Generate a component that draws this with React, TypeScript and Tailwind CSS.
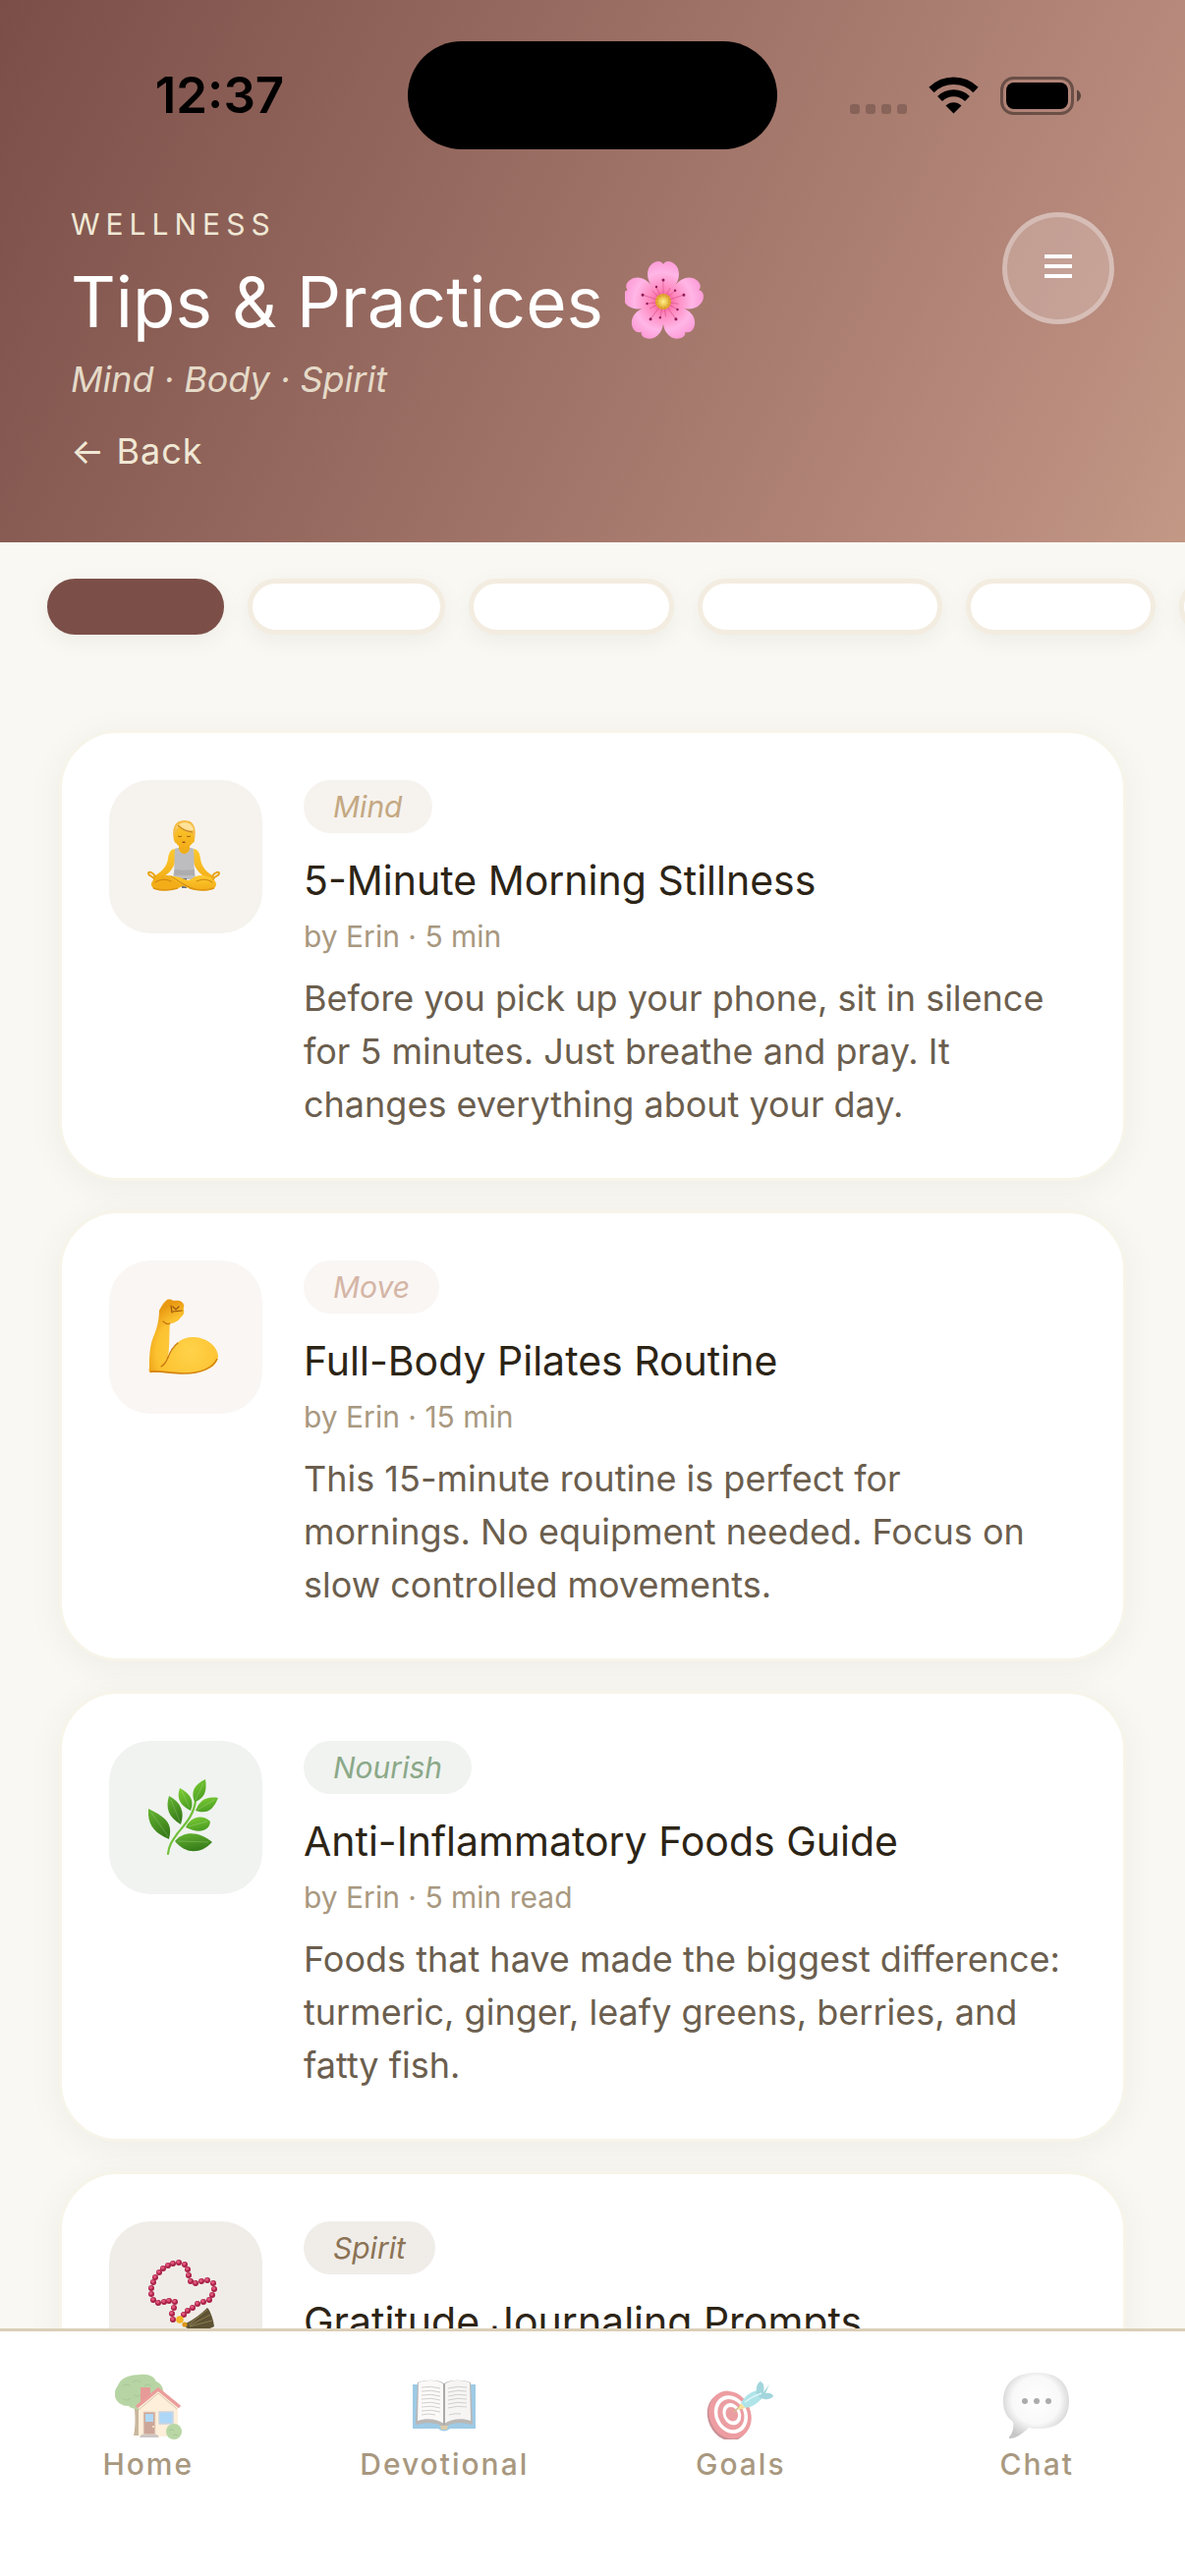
import type { ReactNode } from "react";

/* ---------- Illustrations ---------- */

function Blossom() {
  const petals = [0, 72, 144, 216, 288];
  return (
    <svg role="img" aria-label="Cherry blossom" viewBox="0 0 80 80" className="mb-1 size-20">
      <defs>
        <radialGradient id="petal" gradientUnits="userSpaceOnUse" cx="0" cy="0" r="42">
          <stop offset="0" stopColor="#f0407f" />
          <stop offset="0.3" stopColor="#ff86bd" />
          <stop offset="0.7" stopColor="#ffb6e6" />
          <stop offset="1" stopColor="#fc9ad6" />
        </radialGradient>
        <radialGradient id="pollen">
          <stop offset="0" stopColor="#fff08a" />
          <stop offset="1" stopColor="#dd9c22" />
        </radialGradient>
      </defs>
      <g transform="translate(39 42)">
        {petals.map((a) => (
          <g key={a} transform={`rotate(${a})`}>
            <path
              d="M0 0C-5-8-16-17-16-28C-16-36-10-41-5-41C-3-41-1-40 0-38C1-40 3-41 5-41C10-41 16-36 16-28C16-17 5-8 0 0Z"
              fill="url(#petal)"
            />
            <path d="M0-5V-22M-3-6L-7-15M3-6L7-14" stroke="#d8598f" strokeWidth="0.7" />
            <circle cx="0" cy="-22" r="1.5" fill="#8f1c54" />
            <circle cx="-7" cy="-15" r="1.2" fill="#8f1c54" />
          </g>
        ))}
        <circle r="8" fill="url(#pollen)" />
        <circle r="6" fill="none" stroke="#c98722" strokeWidth="1" strokeDasharray="1 2.4" />
      </g>
    </svg>
  );
}

function Lotus() {
  return (
    <svg role="img" aria-label="Person in lotus position" viewBox="0 0 74 74" className="size-[74px]">
      <defs>
        <linearGradient id="skin" x1="0" y1="0" x2="0" y2="1">
          <stop offset="0" stopColor="#fdca2e" />
          <stop offset="1" stopColor="#f3ad18" />
        </linearGradient>
      </defs>
      <path d="M32 23H43V31L37 36L32 31Z" fill="#f0ae1a" />
      <path d="M29 29C24 29 22 32 21 39C20 47 14 53 5 58L9 62C19 57 27 50 28 42Z" fill="url(#skin)" />
      <path d="M46 29C51 29 53 32 54 39C55 47 60 53 69 58L65 62C56 57 48 50 47 42Z" fill="url(#skin)" />
      <path d="M28 29C29 28 31 28 32 28C32 36 43 36 43 28C45 28 46 28 47 29C48 37 47 44 48 52L49 60H26L27 52C28 44 27 37 28 29Z" fill="#bdbdbf" />
      <path d="M28 50C35 51 41 51 48 50V56H27Z" fill="#adadb0" />
      <path d="M35 59H40V69H35Z" fill="#6b7482" />
      <path d="M26 57C17 54 4 59 4 65C4 72 16 72 24 71C31 70 36 67 41 64Z" fill="#f2ad19" />
      <path d="M49 57C58 54 70 59 70 65C70 72 58 72 50 71C41 70 31 64 22 57C32 56 37 61 42 61C45 60 47 58 49 57Z" fill="url(#skin)" />
      <path d="M24 57C31 61 38 67 48 70M8 63C14 59 20 60 24 62M66 63C60 59 55 60 50 62" stroke="#c98110" strokeWidth="1" fill="none" strokeLinecap="round" />
      <path d="M6 69C14 72 24 71 31 69M68 69C60 72 50 71 43 69" stroke="#dd9410" strokeWidth="1.5" fill="none" />
      <path d="M8 57C5 52 1 52 1 54C1 57 6 56 7 60M66 57C69 52 73 52 73 54C73 57 68 56 67 60" stroke="#e9a318" strokeWidth="2" fill="none" strokeLinecap="round" />
      <path d="M27 12C27 5 31 2 38 2C44 2 48 6 48 12V20C48 22 47 23 46 23C44 26 41 28 37 28C34 28 31 26 29 23C28 23 27 21 27 19Z" fill="url(#skin)" />
      <path d="M27 20C25 11 26 0 38 0C49 0 50 11 48 20L46 13C41 13 35 10 32 6C32 10 29 12 28 14Z" fill="#f5bd48" />
      <path d="M29 9C31 0 46 0 47 10C41 11 35 8 32 4C31 6 30 8 29 9Z" fill="#ffe29a" />
      <path d="M31 5C35 9 39 11 46 12" stroke="#a4640f" strokeWidth="0.8" fill="none" />
      <path d="M31 16q2 1.500 4 0M40 16q2 1.500 4 0" stroke="#a0640c" strokeWidth="1" fill="none" />
      <path d="M35 22q2-1 4 0-2 2-4 0z" fill="#8e3b14" />
    </svg>
  );
}

function Biceps() {
  return (
    <svg role="img" aria-label="Flexed biceps" viewBox="0 0 72 78" className="h-[78px] w-[72px]">
      <defs>
        <radialGradient id="muscle" cx="0.6" cy="0.7" r="0.7">
          <stop offset="0" stopColor="#ffd24a" />
          <stop offset="0.7" stopColor="#fcc22f" />
          <stop offset="1" stopColor="#e99a14" />
        </radialGradient>
      </defs>
      <path
        d="M19 1C21 0 24 1 26 2C30 1 35 2 36 6C37 8 35 9 36 11C37 15 35 17 33 19C30 23 26 25 22 25C21 34 22 46 20 60C24 47 33 39 45 39C58 39 70 47 71 58C71 70 55 77 33 76C22 76 12 74 4 75C1 76 0 74 1 70C1 60 1 49 5 39C9 30 11 20 11 12C13 8 16 3 19 1Z"
        fill="url(#muscle)"
      />
      <path d="M22 25C20 26 17 25 15 23M20 60C22 54 26 48 30 45M20 59C19 63 16 67 13 69" stroke="#c9760f" strokeWidth="1.200" fill="none" strokeLinecap="round" />
      <path d="M2 74C14 73 23 76 36 76C54 76 66 70 70 61" stroke="#d4830f" strokeWidth="1.600" fill="none" />
      <path d="M23 7L24 14M25 8L28 11L31 8M25 13L34 12" stroke="#9a560d" strokeWidth="1.200" fill="none" strokeLinecap="round" />
    </svg>
  );
}

function Herb() {
  return (
    <svg role="img" aria-label="Herb" viewBox="0 0 72 78" className="h-[78px] w-[72px]">
      <defs>
        <linearGradient id="leafLight" x1="0" y1="0" x2="0.4" y2="1">
          <stop offset="0" stopColor="#7fcf35" />
          <stop offset="1" stopColor="#4c9f22" />
        </linearGradient>
        <linearGradient id="leafDark" x1="0" y1="0" x2="0.4" y2="1">
          <stop offset="0" stopColor="#66b632" />
          <stop offset="1" stopColor="#387d1a" />
        </linearGradient>
      </defs>
      <path d="M20 76C21 67 24 63 29 56C36 47 46 38 48 22" stroke="#72c03a" strokeWidth="2.200" fill="none" strokeLinecap="round" />
      <path d="M0 30C-1 46 5 54 21 61C25 46 19 39 0 30Z" fill="url(#leafDark)" />
      <path d="M21 17C17 30 21 39 33 46C37 34 34 24 21 17Z" fill="url(#leafDark)" />
      <path d="M32 9C28 20 33 27 43 32C47 22 43 15 32 9Z" fill="url(#leafLight)" />
      <path d="M58 0C46 6 43 13 47 23C57 20 60 12 58 0Z" fill="url(#leafLight)" />
      <path d="M71 19C58 17 52 22 48 32C60 36 66 31 71 19Z" fill="url(#leafLight)" />
      <path d="M38 49C43 38 55 35 63 43C62 54 50 55 38 49Z" fill="url(#leafLight)" />
      <path d="M27 63C36 52 52 53 65 64C54 76 38 77 27 63Z" fill="url(#leafDark)" />
      <path d="M3 34L20 58M23 21L32 43M34 12L42 29M56 4L48 21M67 21L50 31M41 48L60 43M30 63L61 64" stroke="#ffffff" strokeOpacity="0.18" strokeWidth="1" />
    </svg>
  );
}

const beadPoints = [
  [31, 3], [25, 4], [20, 6], [15, 9], [11, 13], [7, 18], [5, 23], [3, 29], [3, 35], [5, 41],
  [10, 44], [16, 43], [21, 42], [27, 43], [26, 49], [24, 55], [25, 61], [37, 5], [40, 10], [41, 16],
  [43, 22], [48, 24], [54, 22], [60, 21], [66, 24], [67, 30], [65, 36], [62, 41], [56, 43], [50, 45],
  [45, 49], [40, 52], [36, 56],
];

function Beads() {
  return (
    <svg role="img" aria-label="Prayer beads" viewBox="0 0 72 78" className="h-[78px] w-[72px]">
      <path d="M38 65C46 61 54 55 60 49C63 52 66 60 67 68C60 72 48 74 38 69Z" fill="#5d5233" />
      <path d="M41 66L60 51M42 67L63 56M42 68L65 62" stroke="#8b7d52" strokeWidth="1" />
      {beadPoints.map(([x, y]) => (
        <g key={`${x}-${y}`}>
          <circle cx={x} cy={y} r="3" fill="#a92147" />
          <circle cx={x - 0.5} cy={y - 0.7} r="1.700" fill="#e0557a" />
        </g>
      ))}
      <circle cx="32" cy="61" r="3.800" fill="#f4b322" />
      <circle cx="37" cy="66" r="2.600" fill="#d9951a" />
    </svg>
  );
}

function House() {
  return (
    <svg aria-hidden="true" viewBox="0 -2 68 68" className="size-[68px] opacity-50">
      <path d="M19 28H27L25 48L26 62H19C21 52 21 40 19 28Z" fill="#94713f" />
      <path d="M26 0C34-1 40 2 42 7C47 9 50 14 49 20C49 29 40 34 32 33C26 36 18 36 14 32C6 32 0 27 0 21C-1 15 3 12 4 9C7 3 16 0 26 0Z" fill="#72ac4c" />
      <path d="M8 12q4-4 8 0M18 8q4-4 8 0M30 12q4-4 7 0M8 24q4 4 8 0M19 20q4 4 8 0" stroke="#5e9b3f" strokeWidth="1.400" fill="none" />
      <path d="M26 13H36V22L26 30Z" fill="#cf3a34" />
      <path d="M24 33L44 16L64 33V63H24Z" fill="#fde0b4" />
      <path d="M22 33L44 15L66 33" stroke="#d93d3a" strokeWidth="3.500" fill="none" />
      <path d="M24 36L44 19L63 35" stroke="#b98d62" strokeWidth="1" fill="none" />
      <rect x="29" y="38" width="12" height="23" fill="#9b4e35" stroke="#d8b48d" />
      <rect x="31" y="40" width="8" height="8" fill="#62b2ee" />
      <circle cx="39" cy="53" r="1" fill="#ffe3a0" />
      <rect x="45" y="38" width="14" height="12" fill="#5eb0f0" stroke="#9aa9c2" strokeWidth="1.500" />
      <path d="M27 61H43L45 64H25Z" fill="#9b8f8b" />
      <circle cx="60" cy="58" r="8" fill="#73b04c" />
      <path d="M55 57q3-3 5 0M59 62q3-2 5 0" stroke="#518a35" fill="none" />
    </svg>
  );
}

function Book() {
  return (
    <svg aria-hidden="true" viewBox="-2 -8 68 68" className="size-[68px] opacity-50">
      <path d="M0 4H64V49H38Q32 54 26 49H0Z" fill="#3f97cd" />
      <path d="M3 45L5 2C14-1 26-1 32 3C38-1 50-1 59 2L61 45C50 42 38 43 34 47H30C26 43 14 42 3 45Z" fill="#75716d" />
      <path d="M5 41L6 2C15-1 26-1 32 4V44C25 39 14 38 5 41Z" fill="#f8f7f5" />
      <path d="M59 41L58 2C49-1 38-1 32 4V44C39 39 50 38 59 41Z" fill="#eeedeb" />
      <path d="M32 3V45" stroke="#5b5856" strokeWidth="2" />
      <path
        d="M9 7q10-2 19 1M9 11q10-2 19 1M9 15q10-2 19 1M9 19q10-2 19 1M9 23q10-2 19 1M9 27q10-2 19 1M9 31q10-2 19 1M9 35q8-2 14 0M36 8q10-3 19-1M36 12q10-3 19-1M36 16q10-3 19-1M36 20q10-3 19-1M36 24q10-3 19-1M36 28q10-3 19-1M37 35q6-2 12-1"
        stroke="#a3a09e"
        strokeWidth="1"
        fill="none"
      />
      <path d="M28 46h8l-1 4h-6z" fill="#b79b58" />
    </svg>
  );
}

function Target() {
  return (
    <svg aria-hidden="true" viewBox="0 -9 72 68" className="h-[68px] w-[72px] opacity-50">
      <g transform="rotate(-24 25 34)">
        <ellipse cx="22" cy="35" rx="20" ry="25" fill="#96232d" />
        <ellipse cx="25" cy="34" rx="21" ry="25" fill="#dc3e46" />
        <ellipse cx="26" cy="34" rx="16.500" ry="20" fill="#fff" />
        <ellipse cx="26" cy="34" rx="13" ry="16" fill="#d93f47" />
        <ellipse cx="27" cy="34" rx="9" ry="11.500" fill="#fff" />
        <ellipse cx="27" cy="34" rx="6" ry="7.500" fill="#d93f47" />
      </g>
      <path d="M29 31L36 24" stroke="#9c7d22" strokeWidth="1.500" />
      <path d="M33 29L36 22L41 27Z" fill="#f1c33a" />
      <path d="M36 22C40 15 46 10 54 9L60 14C55 21 48 26 41 27Z" fill="#62cbd5" />
      <path d="M52 13C51 6 53 1 56 0C60 2 60 7 59 11L65 3L61 12C65 11 69 13 69 15C66 19 59 19 55 16Z" fill="#48aebb" />
      <path d="M40 21Q48 15 57 12" stroke="#bdf0f2" strokeWidth="1.500" fill="none" />
    </svg>
  );
}

function Bubble() {
  return (
    <svg aria-hidden="true" viewBox="0 0 68 68" className="size-[68px] opacity-50">
      <defs>
        <radialGradient id="bubble" cx="0.5" cy="0.42" r="0.6">
          <stop offset="0" stopColor="#ffffff" />
          <stop offset="0.6" stopColor="#f4f4f4" />
          <stop offset="1" stopColor="#8f8f8f" />
        </radialGradient>
      </defs>
      <path
        d="M34 0C56 0 67 11 67 29C67 47 56 57 36 57C33 57 29 57 26 56C20 62 13 67 7 67C5 67 6 65 8 63C10 59 11 55 10 50C3 45 0 38 0 29C0 11 12 0 34 0Z"
        fill="url(#bubble)"
      />
      <g fill="#5a5a5a">
        <circle cx="22" cy="29" r="3" />
        <circle cx="34" cy="29" r="3" />
        <circle cx="46" cy="29" r="3" />
      </g>
    </svg>
  );
}

/* ---------- Status bar ---------- */

function StatusBar() {
  return (
    <div className="flex items-center pt-[42px] text-black">
      <div className="flex-1 pl-8 text-center text-[51px] leading-[60px] font-semibold">12:37</div>
      <div className="h-[110px] w-[376px] rounded-full bg-black" />
      <div className="flex flex-1 items-center justify-center gap-[22px] pr-8">
        <svg aria-hidden="true" viewBox="0 0 58 38" className="h-[38px] w-[58px]" fill="#000" fillOpacity="0.2">
          <rect x="0" y="28" width="10" height="10" rx="3" />
          <rect x="16" y="28" width="10" height="10" rx="3" />
          <rect x="32" y="28" width="10" height="10" rx="3" />
          <rect x="48" y="28" width="10" height="10" rx="3" />
        </svg>
        <svg aria-hidden="true" viewBox="0 0 51 38" className="h-[38px] w-[51px]">
          <path d="M3 13.500A32 32 0 0 1 48 13.500" fill="none" stroke="#000" strokeWidth="7.500" />
          <path d="M11.500 22.500A20 20 0 0 1 39.500 22.500" fill="none" stroke="#000" strokeWidth="7" />
          <path d="M25.500 37.500L17.500 29.500C22 25 29 25 33.500 29.500Z" fill="#000" />
        </svg>
        <svg aria-hidden="true" viewBox="0 0 82 39" className="h-[39px] w-[82px]">
          <rect x="1.500" y="1.500" width="72" height="36" rx="12" fill="none" stroke="#000" strokeOpacity="0.4" strokeWidth="3" />
          <rect x="6" y="6" width="63" height="27" rx="8" fill="#000" />
          <path d="M78 13.500C80.500 14.500 82 17 82 19.500C82 22 80.500 24.500 78 25.500Z" fill="#000" fillOpacity="0.5" />
        </svg>
      </div>
    </div>
  );
}

/* ---------- Data ---------- */

const filters = [
  { label: "All", width: "w-[180px]" },
  { label: "Mind", width: "w-[201px]" },
  { label: "Move", width: "w-[209px]" },
  { label: "Nourish", width: "w-[249px]" },
  { label: "Spirit", width: "w-[193px]" },
  { label: "Rest", width: "w-[193px]" },
];

type Tip = {
  tag: string;
  title: string;
  meta?: string;
  body?: string;
  art: ReactNode;
  tint: string;
  ink: string;
};

const tips: Tip[] = [
  {
    tag: "Mind",
    title: "5-Minute Morning Stillness",
    meta: "by Erin · 5 min",
    body: "Before you pick up your phone, sit in silence for 5 minutes. Just breathe and pray. It changes everything about your day.",
    art: <Lotus />,
    tint: "bg-[#f6f3ef]",
    ink: "text-[#c4a882]",
  },
  {
    tag: "Move",
    title: "Full-Body Pilates Routine",
    meta: "by Erin · 15 min",
    body: "This 15-minute routine is perfect for mornings. No equipment needed. Focus on slow controlled movements.",
    art: <Biceps />,
    tint: "bg-[#faf6f4]",
    ink: "text-[#d4b5a5]",
  },
  {
    tag: "Nourish",
    title: "Anti-Inflammatory Foods Guide",
    meta: "by Erin · 5 min read",
    body: "Foods that have made the biggest difference: turmeric, ginger, leafy greens, berries, and fatty fish.",
    art: <Herb />,
    tint: "bg-[#f0f3f0]",
    ink: "text-[#8ba888]",
  },
  {
    tag: "Spirit",
    title: "Gratitude Journaling Prompts",
    art: <Beads />,
    tint: "bg-[#f0ede9]",
    ink: "text-[#8b7355]",
  },
];

const tabs = [
  { label: "Home", icon: <House /> },
  { label: "Devotional", icon: <Book /> },
  { label: "Goals", icon: <Target /> },
  { label: "Chat", icon: <Bubble /> },
];

/* ---------- Page ---------- */

function TipCard({ tip }: { tip: Tip }) {
  return (
    <article className="flex gap-[42px] rounded-[60px] border-3 border-[#f7f4ea] bg-white p-12 shadow-[0_6px_36px_rgba(0,0,0,0.05)]">
      <div className={`flex size-[156px] shrink-0 items-center justify-center rounded-[42px] pr-1 ${tip.tint}`}>{tip.art}</div>
      <div className="min-w-0 flex-1">
        <span className={`inline-block rounded-full px-[30px] py-[9px] align-top text-[30px] leading-9 italic ${tip.tint} ${tip.ink}`}>
          {tip.tag}
        </span>
        <h2 className="mt-[18px] text-[41px] leading-[60px] text-[#2c2416]">{tip.title}</h2>
        {tip.meta && <p className="mt-[9px] text-[30px] leading-9 text-[#a89880]">{tip.meta}</p>}
        {tip.body && <p className="mt-[18px] text-[36px] leading-[54px] text-[#6b5e4e]">{tip.body}</p>}
      </div>
    </article>
  );
}

export default function App() {
  return (
    <div className="flex h-screen flex-col overflow-hidden bg-[#f9f8f2] font-[Inter,sans-serif]">
      <header className="shrink-0 bg-[linear-gradient(115deg,#7b4f48,#b98c7e_87%,#c39885)] pb-[71px]">
        <StatusBar />
        <div className="flex items-start justify-between px-[72px] pt-[58px]">
          <div>
            <p className="text-[30px] leading-9 tracking-[6px] text-[#f0e8d5] uppercase">Wellness</p>
            <h1 className="mt-[14px] flex items-center gap-[22px] text-[71px] leading-[94px] text-white">
              Tips &amp; Practices
              <Blossom />
            </h1>
            <p className="mt-[10px] text-[36px] leading-[44px] text-[#e5dac8] italic">Mind · Body · Spirit</p>
            <button type="button" className="mt-[29px] block text-[36px] leading-[44px] tracking-[1px] text-[#f0e8d5]">
              ← Back
            </button>
          </div>
          <button
            type="button"
            aria-label="Menu"
            className="mt-1.5 flex size-[114px] shrink-0 items-center justify-center rounded-full border-5 border-white/30 bg-white/20"
          >
            <svg aria-hidden="true" viewBox="0 0 28 28" className="size-7">
              <path d="M0 2H28M0 12H28M0 22H28" stroke="#fff" strokeWidth="4" />
            </svg>
          </button>
        </div>
      </header>

      <main className="min-h-0 flex-1 overflow-hidden">
        <div className="flex gap-6 overflow-hidden pt-[37px] pb-[97px] pl-12">
          {filters.map((f, i) => (
            <button
              key={f.label}
              type="button"
              aria-label={f.label}
              aria-pressed={i === 0}
              className={`h-[57px] shrink-0 rounded-full border-5 shadow-[0_6px_24px_rgba(0,0,0,0.05)] ${f.width} ${
                i === 0 ? "border-[#7b4f48] bg-[#7b4f48]" : "border-[#f3ece0] bg-white"
              }`}
            />
          ))}
        </div>
        <div className="flex flex-col gap-[30px] px-[60px]">
          {tips.map((tip) => (
            <TipCard key={tip.title} tip={tip} />
          ))}
        </div>
      </main>

      <nav className="grid shrink-0 grid-cols-4 border-t-3 border-[#dbcfb8] bg-white pt-[42px] pb-24">
        {tabs.map((tab) => (
          <a key={tab.label} href={`#${tab.label.toLowerCase()}`} className="flex flex-col items-center gap-[7px]">
            {tab.icon}
            <span className="text-[30px] leading-9 font-medium tracking-[2px] text-[#a89880]">{tab.label}</span>
          </a>
        ))}
      </nav>
    </div>
  );
}
